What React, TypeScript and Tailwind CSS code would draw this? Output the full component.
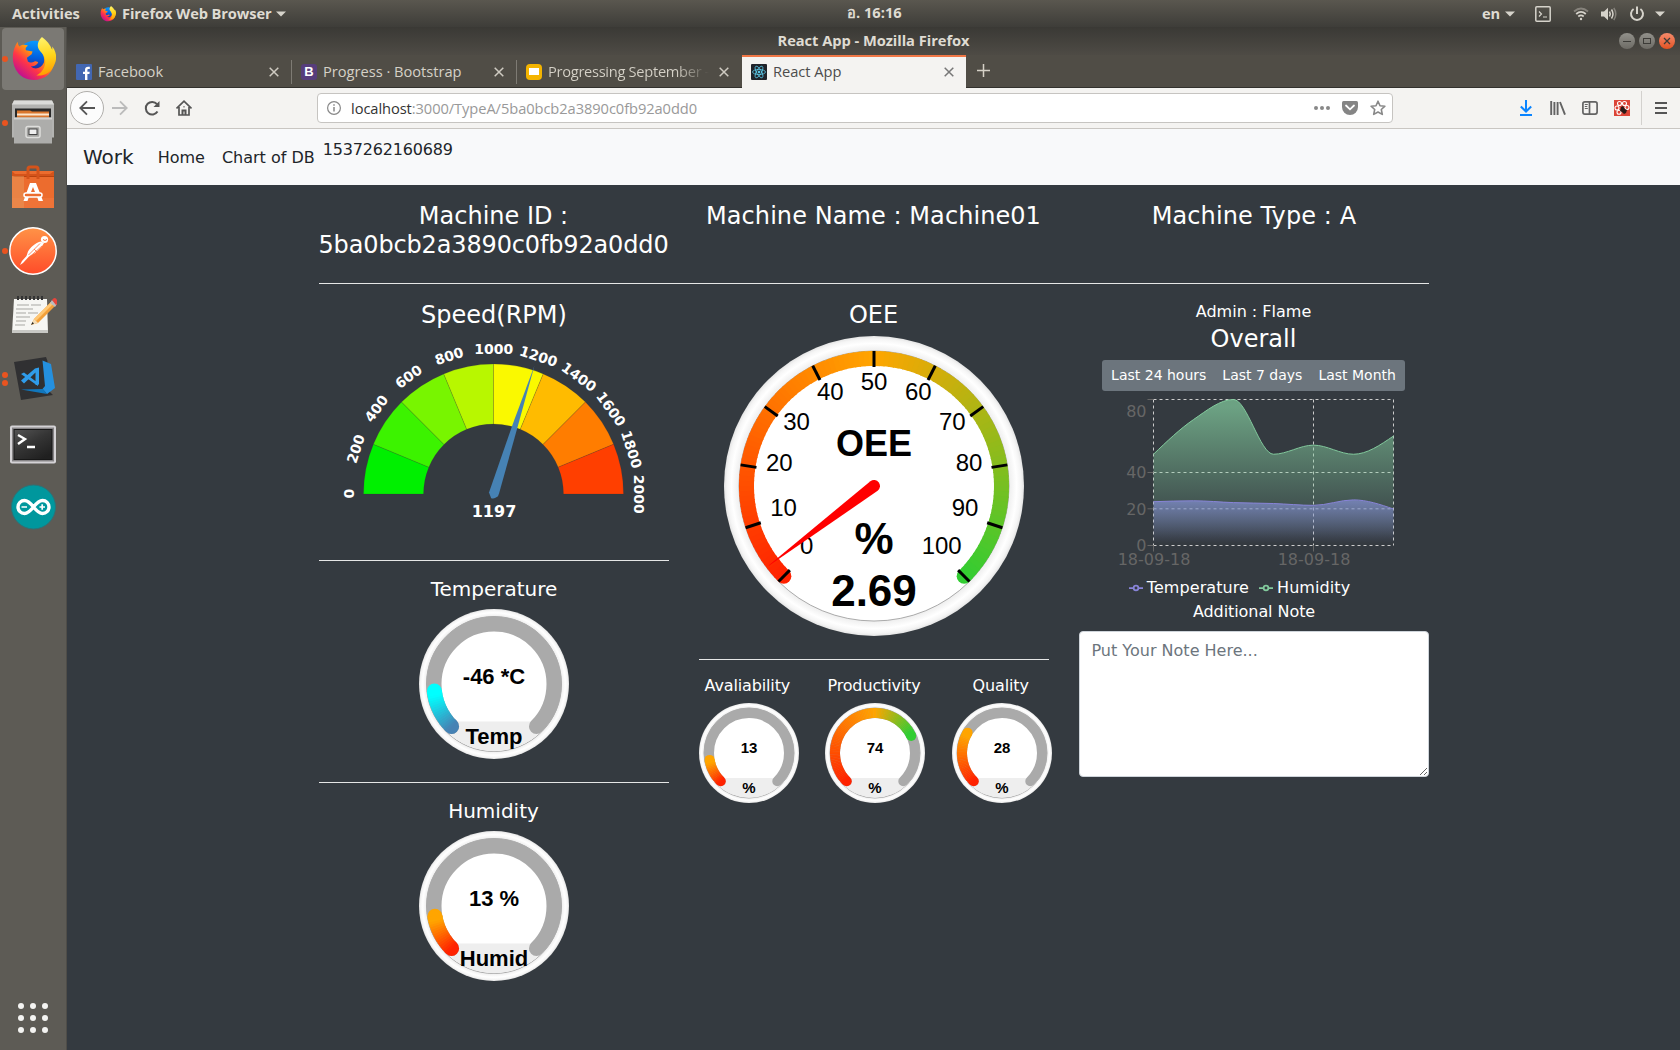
import React from "react";

type Pt = [number, number];
type Stop = [number, number[]];

const RED = [255, 34, 0];
const ORANGE = [255, 165, 0];
const GREEN = [50, 205, 50];
const STEEL = [70, 130, 180];
const CYAN = [0, 255, 255];

// Position on a dial: 0..1 over a 270 degree sweep that starts at the lower left.
function dial(c: number, r: number, t: number): Pt {
  const a = ((45 + 270 * t) * Math.PI) / 180;
  return [c - r * Math.sin(a), c + r * Math.cos(a)];
}

function arc(c: number, r: number, from: number, to: number) {
  const [x0, y0] = dial(c, r, from);
  const [x1, y1] = dial(c, r, to);
  return `M${x0} ${y0}A${r} ${r} 0 ${to - from > 2 / 3 ? 1 : 0} 1 ${x1} ${y1}`;
}

function mix(stops: Stop[], t: number) {
  let i = 0;
  while (i < stops.length - 2 && t > stops[i + 1][0]) i++;
  const [a, ca] = stops[i];
  const [b, cb] = stops[i + 1];
  const k = Math.min(1, Math.max(0, (t - a) / (b - a)));
  return `rgb(${ca.map((v, n) => Math.round(v + (cb[n] - v) * k)).join(",")})`;
}

function Bar({ c, r, w, end, stops }: { c: number; r: number; w: number; end: number; stops: Stop[] }) {
  const n = Math.ceil(end * 120);
  const [sx, sy] = dial(c, r, 0);
  const [ex, ey] = dial(c, r, end);
  return (
    <g>
      <circle cx={sx} cy={sy} r={w / 2} fill={mix(stops, 0)} />
      <circle cx={ex} cy={ey} r={w / 2} fill={mix(stops, end)} />
      {Array.from({ length: n }, (_, i) => (
        <path
          key={i}
          d={arc(c, r, (i / n) * end, Math.min(end, ((i + 1.25) / n) * end))}
          fill="none"
          strokeWidth={w}
          stroke={mix(stops, ((i + 0.5) / n) * end)}
        />
      ))}
    </g>
  );
}

function Rim({ size, id }: { size: number; id: string }) {
  const c = size / 2;
  return (
    <>
      <defs>
        <radialGradient id={id} gradientUnits="userSpaceOnUse" cx={c} cy={c} r={c}>
          <stop offset="0.9" stopColor="#eeeeee" />
          <stop offset="0.95" stopColor="#ffffff" />
          <stop offset="0.98" stopColor="#f5f5f5" />
          <stop offset="1" stopColor="#e4e4e4" />
        </radialGradient>
      </defs>
      <circle cx={c} cy={c} r={c} fill={`url(#${id})`} />
      <circle cx={c} cy={c} r={c * 0.9} fill="#fff" stroke="#888" strokeWidth="0.7" />
    </>
  );
}

function SmallGauge(p: { id: string; size: number; band: number; value: string; title: string; end: number; stops: Stop[]; font: number }) {
  const c = p.size / 2;
  const r = c * 0.9 - p.band / 2;
  return (
    <svg width={p.size} height={p.size} className="block shrink-0" fontFamily="Liberation Sans, Arial, sans-serif" fontWeight="bold" textAnchor="middle">
      <Rim size={p.size} id={p.id} />
      <clipPath id={p.id + "c"}>
        <circle cx={c} cy={c} r={c * 0.895} />
      </clipPath>
      <rect x="0" y={p.size * 0.75} width={p.size} height={p.size} fill="#eee" clipPath={`url(#${p.id}c)`} />
      <path d={arc(c, r, 0, 1)} fill="none" stroke="#aaa" strokeWidth={p.band} strokeLinecap="round" />
      <Bar c={c} r={r} w={p.band} end={p.end} stops={p.stops} />
      <text x={c} y={p.size * 0.5} fontSize={p.font}>{p.value}</text>
      <text x={c} y={p.size * 0.9} fontSize={p.font}>{p.title}</text>
    </svg>
  );
}

const oeeLabels: [string, number, number][] = [
  ["0", 82.7, 218], ["10", 59.5, 180], ["20", 55.3, 135], ["30", 72.5, 94], ["40", 106.3, 64],
  ["50", 150, 54], ["60", 194.3, 64], ["70", 228.3, 94], ["80", 245, 135], ["90", 241, 180], ["100", 217.7, 218],
];

function OeeGauge() {
  const c = 150;
  const stops: Stop[] = [[0, RED], [0.5, ORANGE], [1, GREEN]];
  return (
    <svg width="300" height="300" className="block" fontFamily="Liberation Sans, Arial, sans-serif" textAnchor="middle">
      <Rim size={300} id="oee" />
      <Bar c={c} r={127.5} w={15} end={1} stops={stops} />
      {oeeLabels.map(([t, x, y], i) => {
        const [x0, y0] = dial(c, 135, i / 10);
        const [x1, y1] = dial(c, 119, i / 10);
        return (
          <g key={t}>
            <path d={`M${x0} ${y0}L${x1} ${y1}`} stroke="#000" strokeWidth="3" />
            <text x={x} y={y} fontSize="24">{t}</text>
          </g>
        );
      })}
      <g fontWeight="bold">
        <text x="150" y="119.5" fontSize="36">OEE</text>
        <text x="150" y="217.5" fontSize="44">%</text>
        <text x="150" y="269.5" fontSize="44">2.69</text>
      </g>
      <g transform="translate(150 150) rotate(52.9)">
        <path d="M-6 0A6 6 0 1 1 6 0L0.3 132H-0.3Z" fill="#f00" />
      </g>
    </svg>
  );
}

const speedColors = ["#00f000", "#3cf300", "#78f500", "#b8f700", "#faf900", "#ffbb00", "#ff7d00", "#ff3f00"];

function Speedometer() {
  const p = (r: number, i: number) => {
    const a = Math.PI - (i * Math.PI) / 8;
    return `${r * Math.cos(a)} ${-r * Math.sin(a)}`;
  };
  return (
    <svg width="350" height="208" viewBox="-174.5 -158 350 208" className="block" fontFamily="DejaVu Sans, sans-serif" fontWeight="bold" textAnchor="middle" fill="#fff">
      {speedColors.map((f, i) => (
        <path key={f} fill={f} stroke="#333" strokeOpacity="0.35" strokeWidth="0.5" d={`M${p(130, i)}A130 130 0 0 1 ${p(130, i + 1)}L${p(70, i + 1)}A70 70 0 0 0 ${p(70, i)}Z`} />
      ))}
      {Array.from({ length: 11 }, (_, i) => (
        <text key={i} x="0.3" fontSize="14" transform={`rotate(${i * 18 - 90}) translate(0 -140)`}>{i * 200}</text>
      ))}
      <path fill="#4682b4" d="M41 -128.5L19.300 -70L-4.500 -1.500L-2.300 4.200Q0 5 2 3.800L4.500 2.300L5.600 -0.700L23.800 -66Z" />
      <text x="0.5" y="22.5" fontSize="16">1197</text>
    </svg>
  );
}

// Monotone cubic interpolation through equally spaced points.
function monotone(ys: number[], dx: number) {
  const n = ys.length;
  const s = ys.slice(1).map((y, i) => (y - ys[i]) / dx);
  const m = ys.map((_, i) => {
    if (i === 0 || i === n - 1) return 0;
    const a = s[i - 1], b = s[i];
    return (Math.sign(a) + Math.sign(b)) * Math.min(Math.abs(a), Math.abs(b), 0.5 * Math.abs((a + b) / 2)) || 0;
  });
  m[0] = (3 * s[0] - m[1]) / 2;
  m[n - 1] = (3 * s[n - 2] - m[n - 2]) / 2;
  let d = `M0 ${ys[0]}`;
  for (let i = 1; i < n; i++) {
    const k = dx / 3;
    d += `C${(i - 1) * dx + k} ${ys[i - 1] + k * m[i - 1]} ${i * dx - k} ${ys[i] - k * m[i]} ${i * dx} ${ys[i]}`;
  }
  return d;
}

function Chart() {
  const y = (v: number) => 146 - v * 1.825;
  const hum = monotone([50, 69, 80, 50, 55, 50, 60].map(y), 40);
  const temp = monotone([24, 24.5, 23.5, 23, 22, 25, 20].map(y), 40);
  return (
    <svg width="350" height="180" viewBox="-74.5 -8.5 350 180" className="block" fontFamily="DejaVu Sans, sans-serif" fontSize="16" fill="#666">
      <defs>
        <linearGradient id="gh" x1="0" y1="0" x2="0" y2="1">
          <stop offset="5%" stopColor="#82ca9d" stopOpacity="0.72" />
          <stop offset="95%" stopColor="#82ca9d" stopOpacity="0" />
        </linearGradient>
        <linearGradient id="gt" x1="0" y1="0" x2="0" y2="1">
          <stop offset="5%" stopColor="#8490d4" stopOpacity="0.7" />
          <stop offset="95%" stopColor="#8490d4" stopOpacity="0" />
        </linearGradient>
      </defs>
      <path d="M0 0H240M0 73H240M0 109.3H240M0 146H240M0 0V146M160 0V146M240 0V146" stroke="#ccc" strokeDasharray="3 3" fill="none" />
      <path d={hum + "V146H0Z"} fill="url(#gh)" />
      <path d={hum} fill="none" stroke="#82ca9d" />
      <path d={temp + "V146H0Z"} fill="url(#gt)" />
      <path d={temp} fill="none" stroke="#8884d8" />
      <path d="M-6 0H0M-6 73H0M-6 109.3H0M-6 146H0M0 146V152M160 146V152" stroke="#666" />
      <g textAnchor="end">
        <text x="-7" y="17.5">80</text>
        <text x="-7" y="78.5">40</text>
        <text x="-7" y="115.5">20</text>
        <text x="-7" y="151.5">0</text>
      </g>
      <g textAnchor="middle">
        <text x="0.5" y="165.5">18-09-18</text>
        <text x="160.5" y="165.5">18-09-18</text>
      </g>
    </svg>
  );
}

function LegendItem({ color, label }: { color: string; label: string }) {
  return (
    <span className="flex items-center tracking-[0.08px]">
      <svg width="14" height="14" viewBox="0 0 32 32" className="mr-1 block" fill="none" stroke={color} strokeWidth="4">
        <path d="M0 16h10.667A5.333 5.333 0 0 1 21.333 16H32M21.333 16A5.333 5.333 0 0 1 10.667 16" />
      </svg>
      {label}
    </span>
  );
}

function Caret() {
  return <svg width="10" height="6" viewBox="0 0 10 6" className="block"><path d="M0 .5h10L5 5.5z" fill="#d6d3cb" /></svg>;
}

function FirefoxIcon({ size, id }: { size: number; id: string }) {
  return (
    <svg width={size} height={size} viewBox="0 0 48 48" className="block">
      <defs>
        <linearGradient id={id + "a"} x1="0.8" y1="0.1" x2="0.15" y2="0.85">
          <stop offset="0" stopColor="#fff44f" /><stop offset=".35" stopColor="#ff980e" />
          <stop offset=".65" stopColor="#ff3647" /><stop offset="1" stopColor="#c3108f" />
        </linearGradient>
        <linearGradient id={id + "b"} x1="0.6" y1="0" x2="0.5" y2="1">
          <stop offset="0" stopColor="#0a9bff" /><stop offset=".5" stopColor="#0060df" /><stop offset="1" stopColor="#36157a" />
        </linearGradient>
        <linearGradient id={id + "c"} x1="0.4" y1="0" x2="0.5" y2="1">
          <stop offset="0" stopColor="#fff36b" /><stop offset=".5" stopColor="#ffd51a" /><stop offset="1" stopColor="#ff9a00" />
        </linearGradient>
      </defs>
      <circle cx="25" cy="22" r="18" fill={`url(#${id}b)`} />
      <path fill={`url(#${id}a)`} d="M7 5c.2 2 .8 3.500 2 5 3-2 6-2 9-1-2 2-3 3-2 5l7 1.500-1 3-5 3.500 1 4c2 2 5 1 7 0 2-.6 4 .5 4 1.500-2 3-5 4-8 4 5 4 11 2 14-4 1-4 0-9-4-13L44 13c4 8 3 20-4 27-9 8-24 8-32-1C-1 28 1 14 7 5z" />
      <path fill={`url(#${id}c)`} d="M33 0c-5 5-6 10-2 15 4 4 7 9 5 15-1 5-5 9-9 11 8 1 15-3 18-9 4-7 4-13 1-19l-2-3v4C42 8 38 4 33 0z" />
    </svg>
  );
}

const dockIcons: { dots: number; icon: React.ReactNode }[] = [
  { dots: 1, icon: <FirefoxIcon size={45} id="fd" /> },
  {
    dots: 1,
    icon: (
      <svg width="48" height="48" viewBox="0 1.500 48 48">
        <path d="M5 3h38l2 4v33H3V7z" fill="#b3b3b1" /><path d="M5 3h38l2 4H3z" fill="#dcdcda" />
        <path d="M6 11h36v10H6z" fill="#292929" /><path d="M8 13h13l2 1h17v7H8z" fill="#d9762e" /><path d="M8 16h32v2H8z" fill="#fbe5cc" />
        <path d="M5 20h38v26H5z" fill="#adadab" /><path d="M5 20h38v2H5z" fill="#d2d2d0" />
        <rect x="17" y="29" width="14" height="11" rx="2" fill="#a3a3a1" stroke="#dededc" strokeWidth="1.500" />
        <rect x="20" y="31.500" width="8" height="5.500" fill="#eee" stroke="#444" />
      </svg>
    ),
  },
  {
    dots: 0,
    icon: (
      <svg width="48" height="48" viewBox="0 1 48 48">
        <path d="M3 9h42v37H3z" fill="#ef7337" /><path d="M3 9h42v27H3z" fill="#ec6c2e" /><path d="M3 15l9-3h33v3z" fill="#b8430f" /><path d="M3 9l3 3h35l4-3v5H3z" fill="#d4531a" />
        <path d="M3 14h12v32H3z" fill="#e89a5b" opacity=".5" />
        <path d="M19 17V7q0-2 2-2h6q2 0 2 2v10" fill="none" stroke="#d4531a" strokeWidth="3" />
        <path d="M21 21h6l7 18h-4.500l-1.500-4.500h-8L18.500 39H14.500zM24 25l-2 5h4z" fill="#fff" />
        <rect x="15" y="31" width="18" height="4" rx="2" fill="#ec6c2e" stroke="#fff" strokeWidth="1.500" />
      </svg>
    ),
  },
  {
    dots: 1,
    icon: (
      <svg width="48" height="48" viewBox="0 0 48 48">
        <defs><linearGradient id="pm" x1="0" y1="0" x2="0" y2="1"><stop offset="0" stopColor="#ff9347" /><stop offset="1" stopColor="#ff4c29" /></linearGradient></defs>
        <circle cx="24" cy="24" r="23.200" fill="url(#pm)" stroke="#fff" strokeWidth="1.500" />
        <circle cx="35.500" cy="12.500" r="3.600" fill="#fff" />
        <path d="M31.500 14.500c-6 2-10 6-12.500 10l-1.500 4.500-4.500 5-2 4 3-2 6-6.500 6-3.500 6.500-6 2.500-4z" fill="#fff" />
        <path d="M31 16.500L19.500 28M33 19L21 29.500M25 22l3 3" stroke="#ff6f3a" strokeWidth=".8" /><path d="M34 12.500q2 2 4 0" stroke="#ff6f3a" fill="none" />
      </svg>
    ),
  },
  {
    dots: 0,
    icon: (
      <svg width="48" height="48" viewBox="0 0 48 48">
        <path d="M5 8h33l1 34H3z" fill="#f6f6f3" /><path d="M3 39h36v3H3z" fill="#c8c8c4" />
        <path d="M9 9V5M13 9V5M17 9V5M21 9V5M25 9V5M29 9V5M33 9V5" stroke="#333" strokeWidth="2" />
        <path d="M8 14h12M22 14h10M7 18h17M7 22h10M19 22h10M7 26h14M7 30h10M6 34h10" stroke="#a7a7a3" strokeWidth="1" />
        <path d="M22 34l3-6L42 11l4 4-17 17z" fill="#f3a03a" /><path d="M25 28L42 11l2 2-17 17z" fill="#ffc774" /><path d="M22 34l3-6 4 4z" fill="#f5deb8" /><path d="M22 34l1.500-3 1.500 1.500z" fill="#222" />
        <path d="M41 12l2-3 5 4-2 3z" fill="#bcbcbc" /><path d="M43 9q3-4 5 0t-1 5z" fill="#e8453c" />
      </svg>
    ),
  },
  {
    dots: 2,
    icon: (
      <svg width="48" height="48" viewBox="0 0 48 48">
        <path d="M5 7l32-5 1.500 4L37 33l7 7L12 45z" fill="#303032" />
        <path d="M33.500 5.500l8.500 3.500 4 24-8 6-4.500-5 2.500-3z" fill="#2490df" /><path d="M12 34.500L34 34l4 5z" fill="#1177bd" />
        <path d="M12 19l3-1.500L29 28v3zM12 25.500l14-12 4-1v17l-3.500 .5V17.500L15 28.500z" fill="#2f9cea" />
      </svg>
    ),
  },
  {
    dots: 0,
    icon: (
      <svg width="48" height="48" viewBox="0 -3.500 48 48">
        <defs><linearGradient id="tm" x1="0" y1="0" x2="0.7" y2="1"><stop offset="0" stopColor="#555" /><stop offset=".5" stopColor="#353535" /><stop offset="1" stopColor="#202020" /></linearGradient></defs>
        <rect x="1" y="3" width="46" height="38" rx="2" fill="#d4d2d5" /><rect x="3" y="5" width="42" height="34" fill="#858385" /><rect x="5" y="7" width="38" height="30" fill="url(#tm)" stroke="#171717" />
        <path d="M9 12.500l7 4-7 5M18 24.500h8" stroke="#fff" strokeWidth="2.400" fill="none" />
      </svg>
    ),
  },
  {
    dots: 0,
    icon: (
      <svg width="48" height="48" viewBox="0 0 48 48">
        <circle cx="24.500" cy="24" r="22" fill="#00979d" stroke="#2a7478" />
        <path d="M24.500 24c-4-5-6-6.500-9-6.500a6.500 6.500 0 0 0 0 13c3 0 5-1.500 9-6.500s6-6.500 9-6.500a6.500 6.500 0 0 1 0 13c-3 0-5-1.500-9-6.500z" fill="none" stroke="#fff" strokeWidth="3.400" />
        <path d="M12.500 24h5.500M30.500 24h5.500M33.200 21.200v5.600" stroke="#fff" strokeWidth="1.700" />
      </svg>
    ),
  },
];

function Dock() {
  return (
    <aside className="flex w-[67px] shrink-0 flex-col border-r border-[#4f4d48] bg-[#5d5b55] pt-px">
      {dockIcons.map((d, i) => (
        <div key={i} className={i === 0 ? "ml-0.5 flex h-[62px] w-[62px] items-center rounded bg-[#7b7974]" : "ml-0.5 mt-0.5 flex h-[62px] w-[62px] items-center"}>
          <div className="flex w-[7px] flex-col items-start gap-0.5">
            {Array.from({ length: d.dots }, (_, k) => <i key={k} className="block h-1.5 w-1.5 rounded-full bg-[#e95420]" />)}
          </div>
          <div className={i === 0 ? "ml-0.5" : ""}>{d.icon}</div>
        </div>
      ))}
      <div className="mt-auto mb-[17px] ml-[18px] grid w-[30px] grid-cols-3 gap-1.5">
        {Array.from({ length: 9 }, (_, i) => <i key={i} className="block h-1.5 w-1.5 rounded-full bg-[#f4f4f2]" />)}
      </div>
    </aside>
  );
}

function TopBar() {
  return (
    <header className="relative flex h-[27px] shrink-0 items-center bg-linear-to-b from-[#5a574f] to-[#3e3d39] font-['Open_Sans','Noto_Sans',sans-serif] text-[14.67px] font-bold text-[#dfdbd2]">
      <span className="mb-0.5 ml-3 w-[88px] tracking-[-0.02px]">Activities</span>
      <FirefoxIcon size={16} id="ft" />
      <span className="mb-0.5 ml-1.5 mr-[5px] w-[149px] whitespace-nowrap tracking-[-0.1px]">Firefox Web Browser</span>
      <Caret />
      <span className="absolute left-[847px] top-px whitespace-pre">อ. 16:16</span>
      <div className="ml-auto mr-[15px] flex items-center">
        <span className="mb-0.5 mr-[5px] tracking-[-0.2px]">en</span>
        <Caret />
        <svg width="16" height="16" viewBox="0 0 16 16" className="ml-5 mr-[22px]" fill="none" stroke="#d6d3cb" strokeWidth="1.500"><rect x=".8" y=".8" width="14.400" height="14.400" rx="1" /><path d="M4 5.500l2.500 2.500L4 10.500M8 11h4" strokeWidth="1.200" /></svg>
        <svg width="16" height="14" viewBox="0 0 16 14" className="mr-3" fill="none" stroke="#d6d3cb" strokeWidth="1.800"><path d="M1 4.500Q8-1.500 15 4.500" opacity=".4" /><path d="M3.200 7Q8 2.800 12.800 7M5.300 9.500Q8 7.300 10.700 9.500" /><circle cx="8" cy="12" r="1.200" fill="#d6d3cb" stroke="none" /></svg>
        <svg width="16" height="14" viewBox="0 0 16 14" fill="none" stroke="#d6d3cb" strokeWidth="1.500"><path d="M0 4.500h3L7 .8v12.400L3 9.500H0z" fill="#d6d3cb" stroke="none" /><path d="M8.500 4.500q1.500 2.500 0 5M10.500 2.500q3 4.500 0 9" /><path d="M12.800 1q4 6 0 12" opacity=".4" /></svg>
        <svg width="16" height="16" viewBox="0 0 16 16" className="ml-3 mr-2.5" fill="none" stroke="#d6d3cb" strokeWidth="2"><path d="M4.600 3a6 6 0 1 0 6.800 0M8 .5V8" /></svg>
        <Caret />
      </div>
    </header>
  );
}

function CloseX({ color }: { color: string }) {
  return <svg width="10" height="10" viewBox="0 0 10 10" className="block shrink-0"><path d="M.7.7l8.600 8.600M9.300.7L.7 9.300" stroke={color} strokeWidth="1.500" /></svg>;
}

const tabs = [
  { title: "Facebook", icon: <svg width="16" height="16" viewBox="0 0 16 16"><rect width="16" height="16" rx="1" fill="#4267b2" /><path d="M9 16v-6H7V7.700h2V6c0-2.200 1.200-3.300 3.100-3.300h1.700v2.200h-1.200c-1 0-1.200.5-1.200 1.200v1.600h2.300L13.400 10h-2v6z" fill="#fff" /></svg> },
  { title: "Progress · Bootstrap", icon: <span className="flex h-4 w-4 items-center justify-center rounded-[3px] bg-[#563d7c] font-['Liberation_Sans',sans-serif] text-[13px] font-bold text-white">B</span> },
  { title: "Progressing September -", icon: <span className="flex h-4 w-4 items-center justify-center rounded-sm bg-[#f4b400]"><i className="block h-[7px] w-2.5 bg-white" /></span> },
  { title: "React App", icon: <svg width="16" height="16" viewBox="0 0 16 16" fill="none" stroke="#61dafb" strokeWidth=".7"><rect width="16" height="16" rx="1" fill="#20232a" stroke="none" /><ellipse cx="8" cy="8" rx="6.500" ry="2.500" /><ellipse cx="8" cy="8" rx="6.500" ry="2.500" transform="rotate(60 8 8)" /><ellipse cx="8" cy="8" rx="6.500" ry="2.500" transform="rotate(120 8 8)" /><circle cx="8" cy="8" r="1" fill="#61dafb" /></svg> },
];

function WinButton({ close, children }: { close?: boolean; children: React.ReactNode }) {
  return (
    <span className={close ? "flex h-4 w-4 items-center justify-center rounded-full bg-linear-to-b from-[#f58a6a] to-[#e2521f]" : "flex h-4 w-4 items-center justify-center rounded-full bg-linear-to-b from-[#92918b] to-[#6d6b65]"}>
      <svg width="16" height="16" viewBox="0 0 16 16" fill="none" stroke="#3c3b37" strokeWidth="1">{children}</svg>
    </span>
  );
}

function BrowserChrome() {
  return (
    <div className="shrink-0 font-['Open_Sans','Noto_Sans',sans-serif]">
      <div className="grid h-7 grid-cols-[1fr_auto_1fr] items-center bg-linear-to-b from-[#3a3935] to-[#4e4b45] text-[14.67px] font-bold text-[#dfdbd2]">
        <span className="col-start-2 mb-0.5 tracking-[-0.04px]">React App - Mozilla Firefox</span>
        <div className="mr-[5px] flex justify-end gap-1">
          <WinButton><path d="M4 8.500h8" /></WinButton>
          <WinButton><rect x="4.500" y="5.500" width="7" height="5" /></WinButton>
          <WinButton close><path d="M5 5l6 6M11 5l-6 6" strokeWidth="1.300" /></WinButton>
        </div>
      </div>
      <div className="flex h-[33px] bg-[#504d46] text-[14.67px] text-[#d5d1c7] shadow-[inset_0_-1px_0_#32312d]">
        {tabs.map((t, i) => (
          <div key={t.title} className={i === 3 ? "flex w-[224px] items-center border-t-2 border-[#f07746] bg-[#f4f3f1] pb-0.5 pl-[9px] pr-3 text-[#4c4c4c]" : "flex w-[225px] items-center pl-[9px] pr-[13px]"}>
            {t.icon}
            <span className="mb-0.5 ml-1.5 flex-1 overflow-hidden whitespace-nowrap tracking-[-0.02px]">
              {i === 2 ? <span className="bg-linear-to-r from-[#d5d1c7] from-80% to-[#504d46] bg-clip-text tracking-[-0.3px] text-transparent">{t.title}</span> : t.title}
            </span>
            <CloseX color={i === 3 ? "#777" : "#cfcbc2"} />
            {i < 2 && <i className="-mr-[13px] ml-3 block h-6 w-px bg-[#7e7b74]" />}
          </div>
        ))}
        <svg width="13" height="13" viewBox="0 0 13 13" className="ml-[11px] mt-[9px]" stroke="#d5d1c7" strokeWidth="1.500"><path d="M6.500 0v13M0 6.500h13" /></svg>
      </div>
      <div className="flex h-[41px] items-center border-b border-[#c9c6c2] bg-[#f4f3f1] pl-[3px]">
        <span className="flex h-[34px] w-[34px] items-center justify-center rounded-full border border-[#b0aeab] bg-[#fcfcfc]">
          <svg width="16" height="16" viewBox="0 0 16 16" fill="none" stroke="#555" strokeWidth="1.800"><path d="M16 8H1.500M8 1.300L1.300 8 8 14.700" /></svg>
        </span>
        <svg width="16" height="16" viewBox="0 0 16 16" className="ml-2" fill="none" stroke="#bbb" strokeWidth="1.800"><path d="M0 8h14.500M8 1.300L14.700 8 8 14.700" /></svg>
        <svg width="16" height="16" viewBox="0 0 16 16" className="ml-4" fill="none" stroke="#555" strokeWidth="2"><path d="M13.500 11.500A6.300 6.300 0 1 1 13 4.200" /><path d="M15.500 1v6h-6z" fill="#555" stroke="none" /></svg>
        <svg width="16" height="16" viewBox="0 0 16 16" className="ml-4" fill="none" stroke="#555" strokeWidth="1.700"><path d="M.5 8.500L8 1.200l7.500 7.300M3 7v8h10V7" /><path d="M6.500 15v-4.500h3V15M8 6.500v.8" strokeWidth="2" /></svg>
        <div className="ml-[125px] flex h-[30px] w-[1076px] items-center rounded border border-[#c6c4c1] bg-white pl-[9px] pr-1.5 text-[14.67px] text-[#999]">
          <svg width="14" height="14" viewBox="0 0 14 14" className="mr-2.5" fill="none" stroke="#888" strokeWidth="1.200"><circle cx="7" cy="7" r="6.400" /><path d="M7 6v4.500M7 3.300v1.400" strokeWidth="1.500" /></svg>
          <span className="flex-1 whitespace-nowrap tracking-[-0.07px]"><span className="text-[#333]">localhost</span>:3000/TypeA/5ba0bcb2a3890c0fb92a0dd0</span>
          <svg width="16" height="4" viewBox="0 0 16 4" className="mr-3" fill="#888"><circle cx="2" cy="2" r="2" /><circle cx="8" cy="2" r="2" /><circle cx="14" cy="2" r="2" /></svg>
          <svg width="16" height="14" viewBox="0 0 16 14" className="mr-3"><path d="M1.500 0h13Q16 0 16 1.500V6A8 8 0 0 1 0 6V1.500Q0 0 1.500 0z" fill="#858585" /><path d="M4 4.500l4 3.800 4-3.800" fill="none" stroke="#fff" strokeWidth="1.800" strokeLinecap="round" /></svg>
          <svg width="16" height="16" viewBox="0 0 16 16" fill="none" stroke="#888" strokeWidth="1.600"><path d="M8 1.200l2 4.500 4.900.5-3.600 3.300 1 4.900L8 12l-4.300 2.400 1-4.900L1.100 6.200 6 5.700z" strokeLinejoin="round" /></svg>
        </div>
        <div className="ml-auto flex items-center">
          <svg width="12" height="16" viewBox="0 0 12 16" className="mr-[18px]" fill="none" stroke="#0a84ff" strokeWidth="2"><path d="M6 0v11M.8 6.500L6 11.500l5.200-5M0 15h12" /></svg>
          <svg width="16" height="14" viewBox="0 0 16 14" className="mr-4" stroke="#636363" strokeWidth="1.900"><path d="M1.200 0v14M4.400 1v13M7.600 1v13M10 1l5 12.700" /></svg>
          <svg width="16" height="14" viewBox="0 0 16 14" className="mr-4" fill="none" stroke="#636363" strokeWidth="1.700"><rect x=".9" y=".9" width="14.200" height="12.200" rx="2" /><path d="M7.500 1v12" /><path d="M2.800 3.500h3M2.800 5.500h2.500M2.800 7.500h3" strokeWidth="1" /></svg>
          <svg width="16" height="16" viewBox="0 0 16 16" className="mr-[11px]" fill="none"><rect width="16" height="16" fill="#dc4437" /><g stroke="#fff" strokeWidth="1.100"><circle cx="5.500" cy="3.500" r="2" /><circle cx="10.500" cy="3.500" r="2" /><circle cx="3" cy="8" r="2" /><circle cx="13" cy="7.500" r="2" /><circle cx="5" cy="12.300" r="2" /></g><path d="M7 7l2-1 2 3 2 1-1 3-2 1-2-2-2-1z" fill="#2a1a18" /></svg>
          <i className="mr-[13px] block h-[34px] w-px bg-[#d3d1ce]" />
          <svg width="12" height="12" viewBox="0 0 12 12" className="mr-[13px]" stroke="#555" strokeWidth="2"><path d="M0 1h12M0 6h12M0 11h12" /></svg>
        </div>
      </div>
    </div>
  );
}

const minis = [
  { title: "Avaliability", value: "13", end: 0.13, stops: [[0, RED], [0.115, ORANGE], [0.13, ORANGE]] as Stop[] },
  { title: "Productivity", value: "74", end: 0.74, stops: [[0, RED], [0.5, ORANGE], [0.72, GREEN]] as Stop[] },
  { title: "Quality", value: "28", end: 0.28, stops: [[0, RED], [0.26, ORANGE], [0.28, ORANGE]] as Stop[] },
];

function Dashboard() {
  const h4 = "text-[24px] leading-[28.8px]";
  return (
    <main className="flex-1 bg-[#343a40] pt-[17px] font-['DejaVu_Sans',sans-serif] text-white">
      <div className="mx-auto w-[1110px]">
        <div className="grid grid-cols-3 gap-x-[30px] border-b border-[#e5e6e6] pb-[23px] text-center">
          <h4 className={h4}>Machine ID :<br /><span className="tracking-[-0.15px]">5ba0bcb2a3890c0fb92a0dd0</span></h4>
          <h4 className={h4}><span className="tracking-[0.07px]">Machine Name : Machine01</span></h4>
          <h4 className="pl-px text-[24px] leading-[28.8px]"><span className="tracking-[0.1px]">Machine Type : A</span></h4>
        </div>
        <div className="grid grid-cols-3 gap-x-[30px] pt-4 text-center">
          <section className="flex flex-col items-center pt-px">
            <h4 className="pl-px text-[24px] leading-[28.8px]">Speed(RPM)</h4>
            <div className="mt-[7px] flex h-[225px] w-full justify-center border-b border-[#e5e6e6]"><Speedometer /></div>
            <h5 className="mt-4 mb-2 pl-px text-[20px] leading-6">Temperature</h5>
            <div className="flex h-[174px] w-full justify-center border-b border-[#e5e6e6]">
              <SmallGauge id="tp" size={150} band={15} value="-46 *C" title="Temp" end={0.142} stops={[[0, STEEL], [0.125, CYAN], [0.142, CYAN]]} font={22} />
            </div>
            <h5 className="mt-4 mb-2 text-[20px] leading-6">Humidity</h5>
            <SmallGauge id="hm" size={150} band={15} value="13 %" title="Humid" end={0.13} stops={[[0, RED], [0.115, ORANGE], [0.13, ORANGE]]} font={22} />
          </section>
          <section className="pt-px">
            <h4 className={h4}>OEE</h4>
            <div className="mt-[7px] flex h-[324px] justify-center border-b border-[#e5e6e6]"><OeeGauge /></div>
            <div className="-mx-[15px] mt-4 grid grid-cols-3">
              {minis.map((m) => (
                <div key={m.title} className="px-[15px]">
                  <p className="mb-[7px] pl-px text-[16px] leading-[19.2px] tracking-[-0.14px]">{m.title}</p>
                  <div className="flex"><SmallGauge id={m.title} size={100} band={10} value={m.value} title="%" end={m.end} stops={m.stops} font={15} /></div>
                </div>
              ))}
            </div>
          </section>
          <section className="flex flex-col items-center text-[16px] leading-6">
            <p>Admin : Flame</p>
            <h4 className="mt-px text-[24px] leading-[28.8px]">Overall</h4>
            <div className="mt-[7px] flex h-[31px] items-center gap-4 rounded-[3px] bg-[#6c757d] px-[9px] text-[14px] leading-[21px]">
              <span>Last 24 hours</span><span>Last 7 days</span><span>Last Month</span>
            </div>
            <div className="h-[185px]"><Chart /></div>
            <div className="-ml-[28px] flex gap-2.5"><LegendItem color="#8884d8" label="Temperature" /><LegendItem color="#82ca9d" label="Humidity" /></div>
            <p className="pl-px tracking-[-0.07px]">Additional Note</p>
            <textarea placeholder="Put Your Note Here..." className="mt-[7px] block h-[146px] w-full rounded border border-[#ced4da] bg-white px-3 py-[7px] text-[16px] leading-6 text-[#495057] placeholder:text-[#6c757d]" />
          </section>
        </div>
      </div>
    </main>
  );
}

export default function App() {
  return (
    <div className="flex h-[1050px] w-[1680px] flex-col overflow-hidden">
      <TopBar />
      <div className="flex min-h-0 flex-1">
        <Dock />
        <div className="flex min-w-0 flex-1 flex-col">
          <BrowserChrome />
          <nav className="flex h-14 shrink-0 items-center bg-[#f8f9fa] pl-4 pt-px font-['DejaVu_Sans',sans-serif] text-[16px] text-[#212529]">
            <span className="mr-6 mb-px text-[20px]">Work</span>
            <span className="mr-[17px]">Home</span>
            <span className="mr-2">Chart of DB</span>
            <span className="-mt-4 tracking-[-0.18px]">1537262160689</span>
          </nav>
          <Dashboard />
        </div>
      </div>
    </div>
  );
}
